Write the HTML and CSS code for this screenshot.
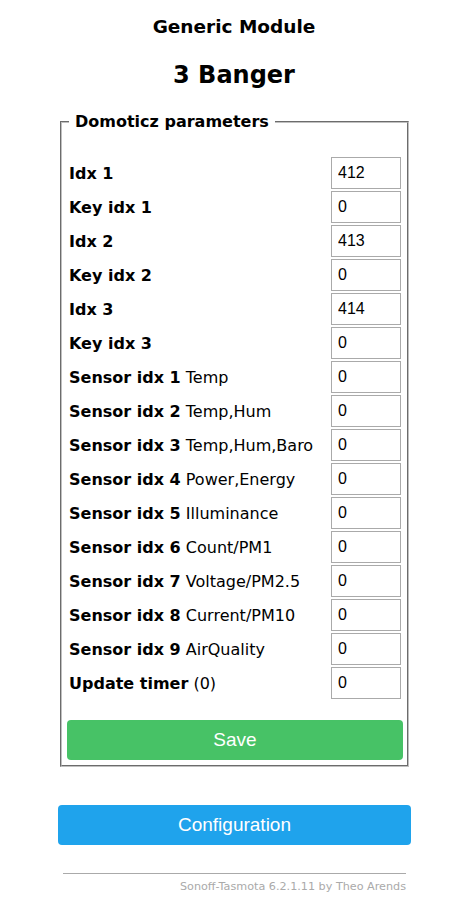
FILE: index.html
```html
<!DOCTYPE html>
<html lang="en">
<head>
    <meta charset="UTF-8">
    <title>Generic Module - Domoticz</title>
    <link rel="stylesheet" href="styles.css">
</head>
<body>
    <div class="page">
        <div class="header">
            <h3>Generic Module</h3>
            <h2>3 Banger</h2>
        </div>
        <fieldset class="params">
            <legend>Domoticz parameters</legend>
            <form class="param-form">
                <table class="param-table">
                    <tr><td><b>Idx 1</b></td><td><input value="412"></td></tr>
                    <tr><td><b>Key idx 1</b></td><td><input value="0"></td></tr>
                    <tr><td><b>Idx 2</b></td><td><input value="413"></td></tr>
                    <tr><td><b>Key idx 2</b></td><td><input value="0"></td></tr>
                    <tr><td><b>Idx 3</b></td><td><input value="414"></td></tr>
                    <tr><td><b>Key idx 3</b></td><td><input value="0"></td></tr>
                    <tr><td><b>Sensor idx 1</b> Temp</td><td><input value="0"></td></tr>
                    <tr><td><b>Sensor idx 2</b> Temp,Hum</td><td><input value="0"></td></tr>
                    <tr><td><b>Sensor idx 3</b> Temp,Hum,Baro</td><td><input value="0"></td></tr>
                    <tr><td><b>Sensor idx 4</b> Power,Energy</td><td><input value="0"></td></tr>
                    <tr><td><b>Sensor idx 5</b> Illuminance</td><td><input value="0"></td></tr>
                    <tr><td><b>Sensor idx 6</b> Count/PM1</td><td><input value="0"></td></tr>
                    <tr><td><b>Sensor idx 7</b> Voltage/PM2.5</td><td><input value="0"></td></tr>
                    <tr><td><b>Sensor idx 8</b> Current/PM10</td><td><input value="0"></td></tr>
                    <tr><td><b>Sensor idx 9</b> AirQuality</td><td><input value="0"></td></tr>
                    <tr><td><b>Update timer</b> (0)</td><td><input value="0"></td></tr>
                </table>
                <button type="button" class="btn btn-save">Save</button>
            </form>
        </fieldset>
        <div class="nav">
            <button type="button" class="btn">Configuration</button>
        </div>
        <div class="footer">
            <hr>
            <div class="credits">Sonoff-Tasmota 6.2.1.11 by Theo Arends</div>
        </div>
    </div>
</body>
</html>
```

FILE: styles.css
```css
body {
    margin: 0;
    font-family: "DejaVu Sans", Verdana, sans-serif;
    color: #000;
    background: #fff;
}
.page {
    width: 354px;
    margin: 0 auto;
}
.header {
    text-align: center;
}
.header h3 {
    margin: 0;
    padding-top: 16px;
    font-size: 18.5px;
    line-height: 22px;
}
.header h2 {
    margin: 0;
    padding-top: 22px;
    font-size: 24px;
    line-height: 30px;
}
.params {
    margin: 22px 2px 0 3px;
    padding: 0 4px 5px 5px;
    border: 2px groove #c0c0c0;
}
.params legend {
    font-weight: bold;
    font-size: 16px;
    padding: 0 6px;
    margin-left: 2px;
}
.param-form {
    padding-top: 25px;
}
.param-table {
    width: 100%;
    border-collapse: collapse;
    font-size: 16px;
}
.param-table td {
    padding: 1px 0 1px 2px;
    vertical-align: middle;
}
.param-table td:last-child {
    width: 70px;
    padding-right: 2px;
    text-align: right;
}
.param-table input {
    width: 70px;
    height: 32px;
    box-sizing: border-box;
    border: 1px solid #aaa;
    padding: 0 6px;
    font-family: "Liberation Sans", Arial, sans-serif;
    font-size: 16px;
    color: #000;
}
.btn {
    display: block;
    width: 100%;
    height: 40px;
    border: 0;
    border-radius: 4px;
    background: #1fa3ec;
    color: #fff;
    font-family: "Liberation Sans", Arial, sans-serif;
    font-size: 19px;
}
.btn-save {
    margin-top: 20px;
    background: #47c266;
}
.nav {
    padding: 38px 0 0 1px;
}
.footer {
    padding: 24px 5px 0 6px;
}
.footer hr {
    margin: 4px 0 0;
    border: 0;
    border-top: 1px solid #aaa;
}
.credits {
    text-align: right;
    font-size: 11.2px;
    color: #aaa;
    padding-top: 6px;
}
```
